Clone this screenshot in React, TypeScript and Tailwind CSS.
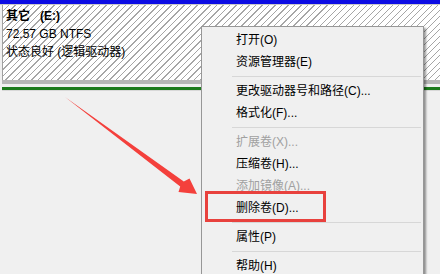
const font = "font-['Liberation_Sans','Noto_Sans_CJK_SC',sans-serif]";

type Item = { label: string; disabled?: boolean } | "sep";

const items: Item[] = [
  { label: "打开(O)" },
  { label: "资源管理器(E)" },
  "sep",
  { label: "更改驱动器号和路径(C)..." },
  { label: "格式化(F)..." },
  "sep",
  { label: "扩展卷(X)...", disabled: true },
  { label: "压缩卷(H)..." },
  { label: "添加镜像(A)...", disabled: true },
  { label: "删除卷(D)..." },
  "sep",
  { label: "属性(P)" },
  "sep",
  { label: "帮助(H)" },
];

function ContextMenu() {
  return (
    <div className="absolute left-[201px] top-[26px] w-[223px] border border-[#979797] bg-[#f0f0f0] pt-[2px] shadow-[2px_2px_2px_rgba(0,0,0,0.4)]">
      {items.map((it, i) =>
        it === "sep" ? (
          <div key={i} className="h-[7px] pl-[30px] pr-[2px] pt-[3px]">
            <div className="h-px bg-[#d7d7d7]" />
          </div>
        ) : (
          <div
            key={i}
            className={`flex h-[22px] items-center pl-[34px] text-[12px] ${
              it.disabled ? "text-[#a0a0a0]" : "text-black"
            }`}
          >
            {it.label}
          </div>
        )
      )}
    </div>
  );
}

export default function App() {
  return (
    <div className={`relative h-[274px] w-[440px] overflow-hidden bg-[#f0f0f0] ${font}`}>
      <div className="h-[4px] bg-[#0c0ce4]" />
      <div className="h-px bg-[#c8c8c8]" />
      <div className="ml-[2px] h-[75px] border-l border-[#a0a0a0] bg-[repeating-linear-gradient(135deg,#ffffff_0px,#ffffff_3.7px,#a6a6a6_3.7px,#a6a6a6_4.6px)] pl-[3px] pt-[2px] text-[12px] leading-[18px] text-black">
        <p className="font-bold">
          其它<span className="ml-[10px]">(E:)</span>
        </p>
        <p>72.57 GB NTFS</p>
        <p>状态良好 (逻辑驱动器)</p>
      </div>
      <div className="ml-[2px] h-[4px] bg-[#b6b6b6]" />
      <div className="h-[3px]" />
      <div className="ml-[2px] h-[3px] bg-[#1c7a1c]" />
      <div className="ml-[2px] h-px bg-[#d8d8d8]" />

      <ContextMenu />

      {/* annotation box around 删除卷 */}
      <div className="absolute left-[205px] top-[191px] h-[31px] w-[121px] border-[3px] border-[#e8413d]" />

      <svg
        className="pointer-events-none absolute left-0 top-0"
        width="440"
        height="274"
        viewBox="0 0 440 274"
      >
        <polygon
          points="65,97 183.8,181.6 189.5,178.5 197,194 178.5,192 180.2,186.4"
          fill="#f4403c"
        />
      </svg>
    </div>
  );
}
